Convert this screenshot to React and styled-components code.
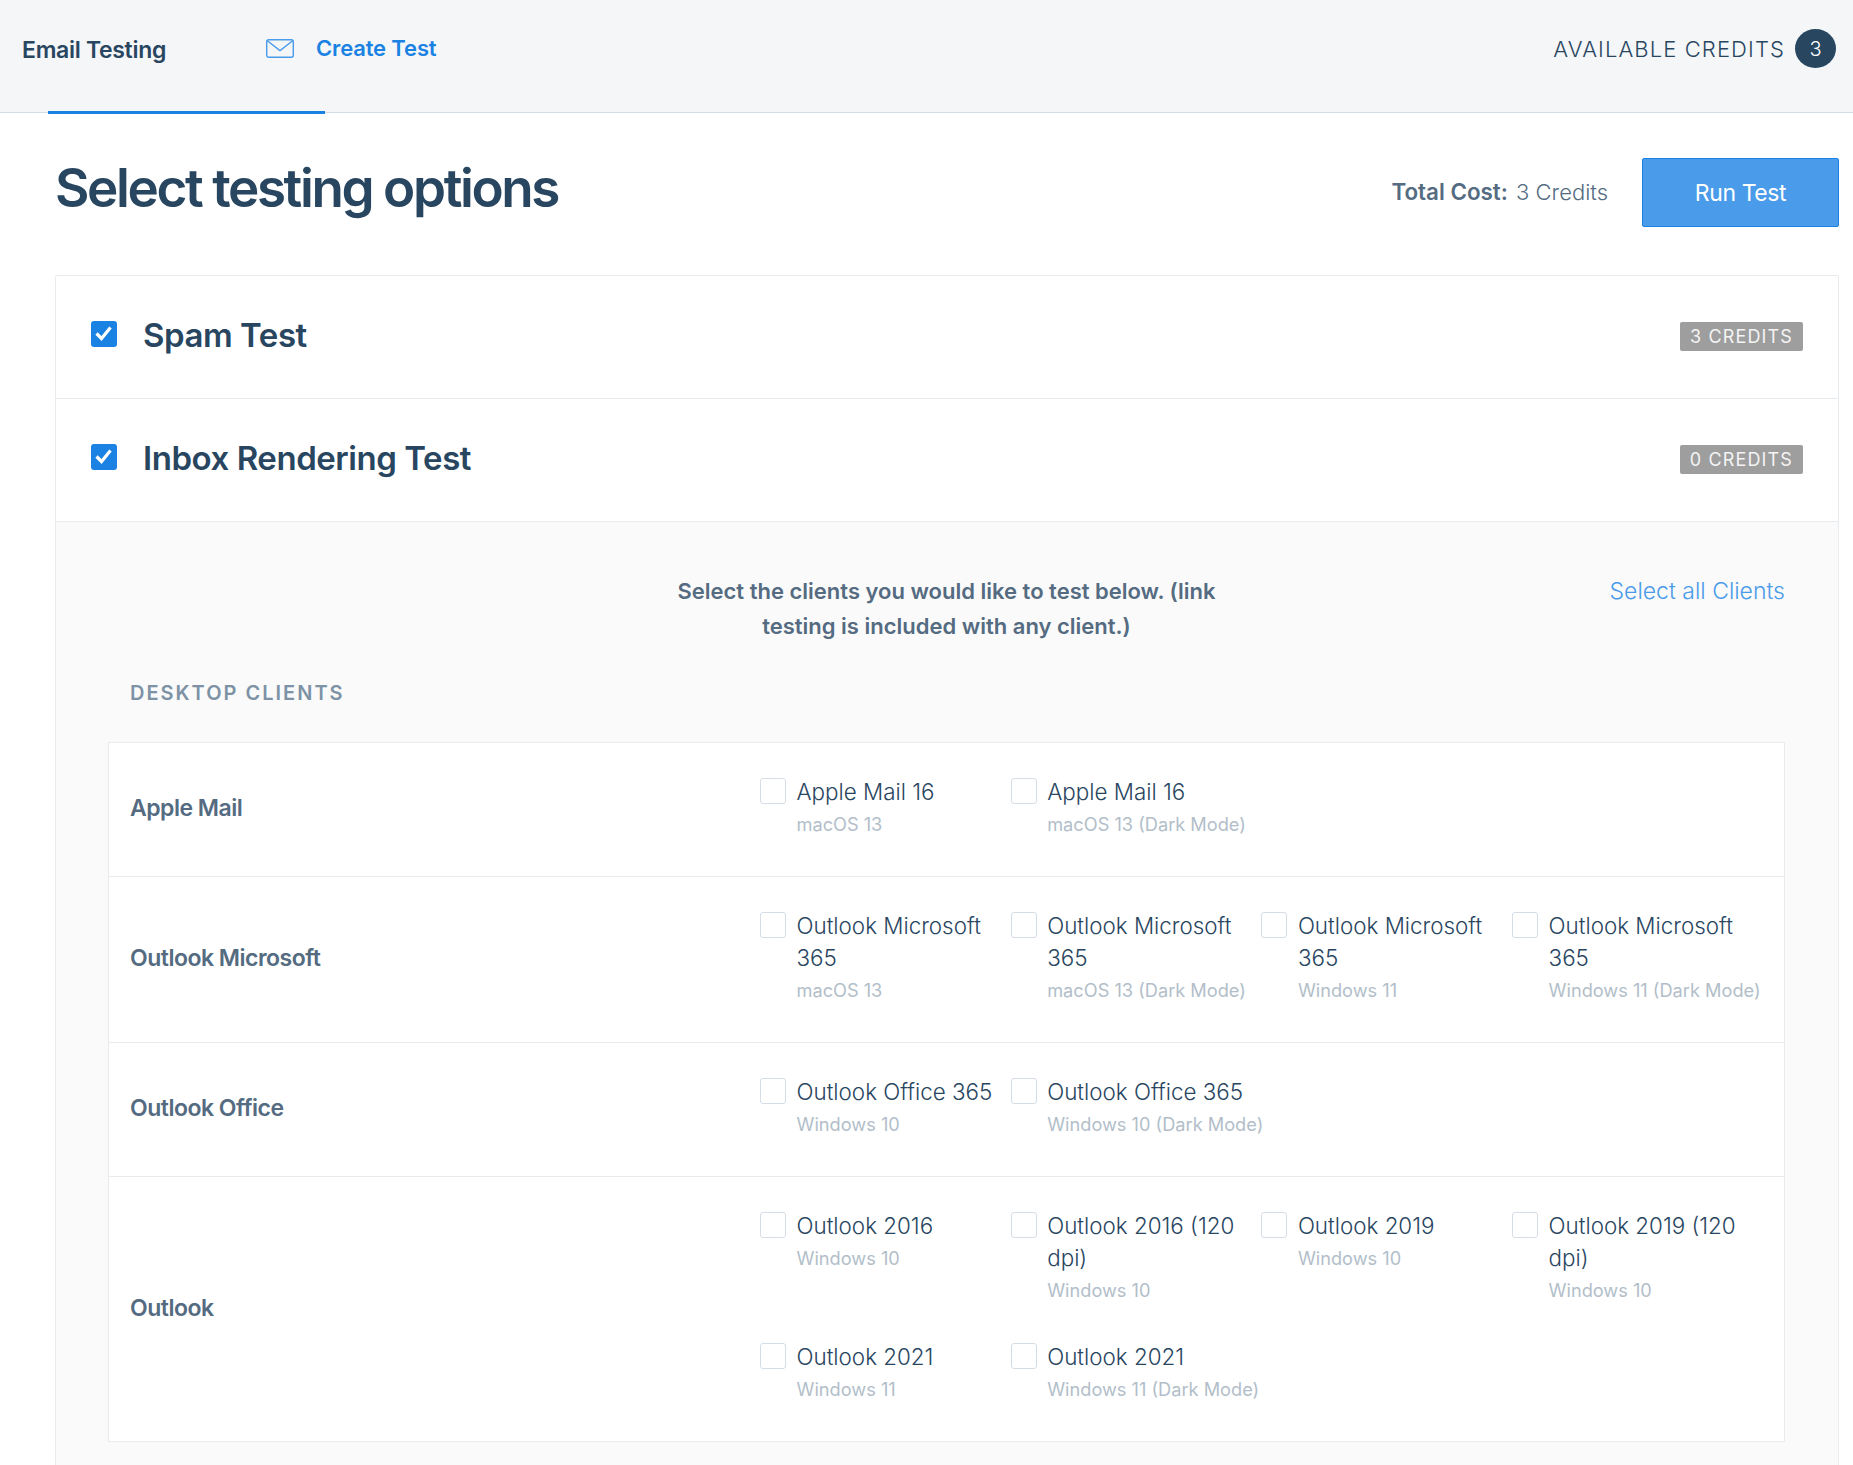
import React from "react";
import styled, { createGlobalStyle } from "styled-components";

const clientGroups = [
  {
    name: "Apple Mail",
    clients: [
      { title: "Apple Mail 16", os: "macOS 13" },
      { title: "Apple Mail 16", os: "macOS 13 (Dark Mode)" },
    ],
  },
  {
    name: "Outlook Microsoft",
    clients: [
      { title: "Outlook Microsoft 365", os: "macOS 13" },
      { title: "Outlook Microsoft 365", os: "macOS 13 (Dark Mode)" },
      { title: "Outlook Microsoft 365", os: "Windows 11" },
      { title: "Outlook Microsoft 365", os: "Windows 11 (Dark Mode)" },
    ],
  },
  {
    name: "Outlook Office",
    clients: [
      { title: "Outlook Office 365", os: "Windows 10" },
      { title: "Outlook Office 365", os: "Windows 10 (Dark Mode)" },
    ],
  },
  {
    name: "Outlook",
    clients: [
      { title: "Outlook 2016", os: "Windows 10" },
      { title: "Outlook 2016 (120 dpi)", os: "Windows 10" },
      { title: "Outlook 2019", os: "Windows 10" },
      { title: "Outlook 2019 (120 dpi)", os: "Windows 10" },
      { title: "Outlook 2021", os: "Windows 11" },
      { title: "Outlook 2021", os: "Windows 11 (Dark Mode)" },
    ],
  },
];

function CheckedBox() {
  return (
    <BlueBox>
      <svg width="26" height="26" viewBox="0 0 26 26" fill="none">
        <path d="M5.5 12.5 L10.5 17.5 L19.5 6.5" stroke="#fff" strokeWidth="3.2" />
      </svg>
    </BlueBox>
  );
}

export default function App() {
  return (
    <>
      <GlobalStyle />
      <Page>
        <Header>
          <Product>Email Testing</Product>
          <CreateLink>
            <svg width="28" height="19" viewBox="0 0 28 19" fill="none">
              <rect x="0.7" y="0.7" width="26.6" height="17.6" rx="2" stroke="#4a9be9" strokeWidth="1.4" />
              <path d="M1 1.5 L14 11.5 L27 1.5" stroke="#4a9be9" strokeWidth="1.4" />
            </svg>
            Create Test
          </CreateLink>
          <Credits>
            AVAILABLE CREDITS
            <CreditCount>3</CreditCount>
          </Credits>
        </Header>
        <Content>
          <TitleRow>
            <Title>Select testing options</Title>
            <TotalCost>
              <strong>Total Cost:</strong> 3 Credits
            </TotalCost>
            <RunButton>Run Test</RunButton>
          </TitleRow>
          <Card>
            <TestRow>
              <CheckedBox />
              <TestName>Spam Test</TestName>
              <Badge>3 CREDITS</Badge>
            </TestRow>
            <TestRow>
              <CheckedBox />
              <TestName>Inbox Rendering Test</TestName>
              <Badge>0 CREDITS</Badge>
            </TestRow>
            <Panel>
              <IntroRow>
                <Intro>Select the clients you would like to test below. (link testing is included with any client.)</Intro>
                <SelectAll>Select all Clients</SelectAll>
              </IntroRow>
              <SectionTitle>DESKTOP CLIENTS</SectionTitle>
              <ClientTable>
                {clientGroups.map((group) => (
                  <GroupRow key={group.name}>
                    <GroupName>{group.name}</GroupName>
                    <ClientGrid>
                      {group.clients.map((client, index) => (
                        <Client key={index}>
                          <EmptyBox />
                          <div>
                            <ClientTitle>{client.title}</ClientTitle>
                            <ClientOs>{client.os}</ClientOs>
                          </div>
                        </Client>
                      ))}
                    </ClientGrid>
                  </GroupRow>
                ))}
              </ClientTable>
            </Panel>
          </Card>
        </Content>
      </Page>
    </>
  );
}

const GlobalStyle = createGlobalStyle`
  html, body {
    margin: 0;
    height: 1465px;
    overflow: hidden;
    background: #fff;
    font-family: Inter, "Liberation Sans", sans-serif;
    color: #294661;
  }
`;

const Page = styled.div`
  width: 1853px;
`;

const Header = styled.header`
  display: flex;
  align-items: flex-start;
  height: 112px;
  padding: 0 17px 0 22px;
  background: #f4f6f8;
  border-bottom: 1px solid #d5dde6;
  position: relative;
  &::after {
    content: "";
    position: absolute;
    left: 48px;
    bottom: -2px;
    width: 277px;
    height: 3px;
    background: #1a82e2;
  }
`;

const Product = styled.div`
  width: 244px;
  margin-top: 35px;
  font-size: 23px;
  line-height: 30px;
  font-weight: 600;
  letter-spacing: -0.3px;
`;

const CreateLink = styled.div`
  display: flex;
  align-items: center;
  gap: 22px;
  margin-top: 33px;
  font-size: 22px;
  line-height: 30px;
  font-weight: 600;
  letter-spacing: -0.15px;
  color: #1a82e2;
`;

const Credits = styled.div`
  display: flex;
  align-items: center;
  gap: 10px;
  margin-left: auto;
  margin-top: 29px;
  font-size: 22px;
  font-weight: 300;
  letter-spacing: 1.1px;
`;

const CreditCount = styled.span`
  display: flex;
  align-items: center;
  justify-content: center;
  width: 41px;
  height: 39px;
  border-radius: 50%;
  background: #294661;
  color: #fff;
  font-size: 20px;
  letter-spacing: 0;
`;

const Content = styled.main`
  padding: 0 14px 0 55px;
`;

const TitleRow = styled.div`
  display: flex;
  align-items: center;
  padding: 45px 0 48px;
`;

const Title = styled.h1`
  flex: 1;
  margin: 0;
  padding-bottom: 9px;
  font-size: 53px;
  line-height: 60px;
  font-weight: 600;
  letter-spacing: -2.4px;
`;

const TotalCost = styled.div`
  margin-right: 34px;
  padding-bottom: 2px;
  font-size: 22px;
  font-weight: 300;
  color: #546b81;
  strong {
    font-size: 22.4px;
    font-weight: 600;
    margin-right: 2px;
  }
`;

const RunButton = styled.button`
  width: 197px;
  height: 69px;
  background: #4a9be9;
  border: 1px solid #1a82e2;
  border-radius: 2px;
  color: #fff;
  font-family: inherit;
  font-size: 23px;
  font-weight: 400;
  letter-spacing: -0.4px;
`;

const Card = styled.section`
  border: 1px solid #e9ecef;
  border-bottom: 0;
  border-radius: 2px;
`;

const TestRow = styled.div`
  display: flex;
  align-items: center;
  height: 123px;
  padding: 0 35px 5px;
  box-sizing: border-box;
  border-bottom: 1px solid #e9ecef;
`;

const BlueBox = styled.span`
  display: flex;
  align-items: center;
  justify-content: center;
  width: 26px;
  height: 26px;
  margin-bottom: 1px;
  border-radius: 3px;
  background: #1a82e2;
`;

const EmptyBox = styled.span`
  flex: none;
  width: 24px;
  height: 24px;
  margin-top: 2px;
  border: 1px solid #d5dde6;
  border-radius: 3px;
  background: #fff;
`;

const TestName = styled.div`
  flex: 1;
  margin-left: 26px;
  font-size: 33px;
  font-weight: 600;
  letter-spacing: -0.45px;
`;

const Badge = styled.span`
  margin-top: 3px;
  padding: 3px 10px;
  border-radius: 2px;
  background: #9e9e9e;
  color: #f4f4f4;
  font-size: 18px;
  line-height: 23px;
  letter-spacing: 1.15px;
`;

const Panel = styled.div`
  height: 944px;
  padding: 52px 53px 0 52px;
  background: #fafafa;
`;

const IntroRow = styled.div`
  display: grid;
  grid-template-columns: 1fr 570px 1fr;
  align-items: start;
`;

const Intro = styled.p`
  grid-column: 2;
  margin: 0;
  text-align: center;
  font-size: 22px;
  line-height: 35px;
  font-weight: 600;
  color: #546b81;
`;

const SelectAll = styled.a`
  justify-self: end;
  white-space: nowrap;
  font-size: 23px;
  line-height: 35px;
  font-weight: 300;
  color: #4a9be9;
`;

const SectionTitle = styled.h2`
  margin: 34px 0 34px 22px;
  font-size: 20px;
  line-height: 30px;
  font-weight: 600;
  letter-spacing: 2px;
  color: #7d92a5;
`;

const ClientTable = styled.div`
  background: #fff;
  border: 1px solid #e9ecef;
`;

const GroupRow = styled.div`
  display: grid;
  grid-template-columns: 630px 1fr;
  align-items: center;
  padding: 33px 0 36px 21px;
  border-bottom: 1px solid #e9ecef;
  &:last-child {
    border-bottom: 0;
  }
`;

const GroupName = styled.div`
  font-size: 23px;
  font-weight: 600;
  letter-spacing: -0.5px;
  color: #546b81;
`;

const ClientGrid = styled.div`
  display: grid;
  grid-template-columns: repeat(4, 250.7px);
  row-gap: 35px;
`;

const Client = styled.label`
  display: flex;
  gap: 10.5px;
`;

const ClientTitle = styled.div`
  width: 206px;
  font-size: 22.4px;
  line-height: 32px;
  font-weight: 300;
  color: #294661;
`;

const ClientOs = styled.div`
  font-size: 18.2px;
  line-height: 32px;
  font-weight: 400;
  white-space: nowrap;
  color: #b2bec9;
`;
